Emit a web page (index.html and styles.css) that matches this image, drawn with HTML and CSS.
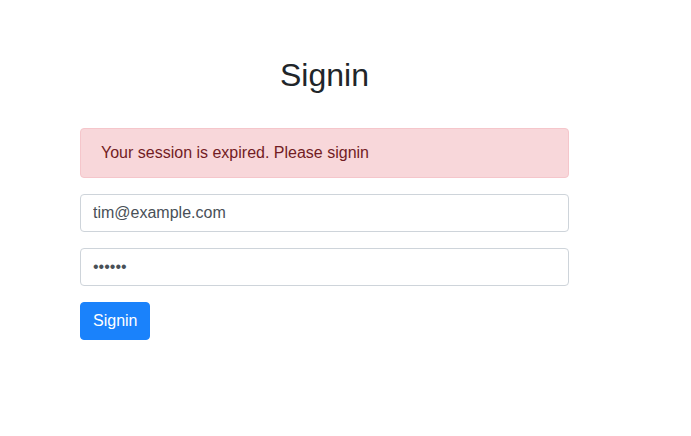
FILE: index.html
```html
<!DOCTYPE html>
<html>
<head>
<meta charset="utf-8">
<link rel="stylesheet" href="styles.css">
</head>
<body>
<div class="container">
  <h2 class="title">Signin</h2>
  <div class="alert">Your session is expired. Please signin</div>
  <form class="form">
    <input class="field" type="email" value="tim@example.com">
    <input class="field" type="password" value="secret">
    <button class="btn" type="button">Signin</button>
  </form>
</div>
</body>
</html>
```

FILE: styles.css
```css
html, body {
  margin: 0;
  padding: 0;
  background: #fff;
}
body {
  font-family: "Liberation Sans", Arial, sans-serif;
  font-size: 16px;
  line-height: 1.5;
  color: #212529;
}
.container {
  width: 489px;
  margin-left: 80px;
  padding-top: 56px;
}
.title {
  margin: 0 0 34px;
  font-size: 32px;
  font-weight: 500;
  line-height: 1.2;
  text-align: center;
  color: #212529;
}
.alert {
  padding: 12px 20px;
  background: #f8d7da;
  border: 1px solid #f5c6cb;
  border-radius: 4px;
  color: #721c24;
  margin-bottom: 16px;
}
.form {
  display: flex;
  flex-direction: column;
  align-items: flex-start;
  gap: 16px;
  margin: 0;
}
.field {
  box-sizing: border-box;
  width: 100%;
  height: 38px;
  padding: 6px 12px;
  font-family: inherit;
  font-size: 16px;
  line-height: 1.5;
  color: #495057;
  background: #fff;
  border: 1px solid #ced4da;
  border-radius: 4px;
  margin: 0;
}
.btn {
  box-sizing: border-box;
  height: 38px;
  padding: 6px 12px;
  font-family: inherit;
  font-size: 16px;
  line-height: 1.5;
  color: #fff;
  background: #1a82fb;
  border: 1px solid #1a82fb;
  border-radius: 4px;
  cursor: pointer;
}
```
